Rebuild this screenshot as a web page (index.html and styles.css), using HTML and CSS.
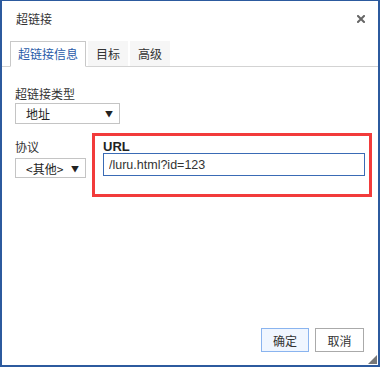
FILE: index.html
```html
<!DOCTYPE html>
<html lang="zh-CN">
<head>
  <meta charset="UTF-8">
  <title>超链接</title>
  <link rel="stylesheet" href="styles.css">
</head>
<body>

<div class="dialog">
  <div class="dialog-head">
    <span class="dialog-title">超链接</span>
    <svg class="close" width="8" height="8" viewBox="0 0 8 8">
      <path d="M1 1L7 7M7 1L1 7" stroke="#666" stroke-width="2" stroke-linecap="square"/>
    </svg>
  </div>

  <div class="tabs">
    <div class="tab active">超链接信息</div>
    <div class="tab">目标</div>
    <div class="tab">高级</div>
  </div>

  <div class="dialog-body">
    <div class="field">
      <label class="label">超链接类型</label>
      <div class="select type-select"><span>地址</span><span class="arrow">▼</span></div>
    </div>

    <div class="row">
      <div class="field proto">
        <label class="label">协议</label>
        <div class="select proto-select"><span>&lt;其他&gt;</span><span class="arrow">▼</span></div>
      </div>
      <div class="url-box">
        <label class="url-label">URL</label>
        <input class="url-input" value="/luru.html?id=123">
      </div>
    </div>
  </div>

  <div class="dialog-foot">
    <button class="btn ok">确定</button>
    <button class="btn">取消</button>
  </div>

  <div class="resize"></div>
</div>

</body>
</html>
```

FILE: styles.css
```css
body {
  margin: 0;
  font-family: "Noto Sans CJK SC", "Liberation Sans", sans-serif;
  font-size: 12px;
  color: #333;
  background: #fff;
}
.dialog {
  position: relative;
  width: 380px;
  height: 367px;
  box-sizing: border-box;
  border: 2px solid #2c5a9e;
  border-top-width: 1px;
  display: flex;
  flex-direction: column;
  background: #fff;
}
.dialog-head {
  height: 40px;
  box-sizing: border-box;
  padding: 10px 13px 0 14px;
  display: flex;
  justify-content: space-between;
  align-items: flex-start;
  line-height: 16px;
}
.dialog-title {
  font-size: 12px;
  color: #333;
}
.close {
  margin-top: 4px;
}
.tabs {
  display: flex;
  align-items: flex-end;
  gap: 2px;
  height: 25px;
  padding-left: 8px;
  border-bottom: 1px solid #d3d3d3;
}
.tab {
  height: 25px;
  line-height: 25px;
  padding: 0 8px;
  background: #f6f6f6;
  color: #333;
}
.tab.active {
  height: 24px;
  line-height: 24px;
  padding: 0 7px;
  background: #fff;
  color: #2a5ba8;
  border: 1px solid #c8c8c8;
  border-bottom-color: #fff;
  margin-bottom: -1px;
}
.dialog-body {
  flex: 1;
  padding: 20px 13px 0;
}
.label {
  display: block;
  line-height: 14px;
}
.select {
  margin-top: 2px;
  height: 21px;
  box-sizing: border-box;
  border: 1px solid #c4c4c4;
  display: flex;
  justify-content: space-between;
  align-items: center;
  padding: 0 6px 0 10px;
  color: #222;
}
.arrow {
  font-size: 8px;
  color: #222;
}
.type-select {
  width: 105px;
}
.row {
  display: flex;
  align-items: flex-start;
  margin-top: 9px;
}
.proto {
  padding-top: 7px;
}
.proto-select {
  width: 71px;
  height: 20px;
  margin-top: 4px;
}
.url-box {
  margin-left: 6px;
  width: 280px;
  box-sizing: border-box;
  border: 3px solid #f23b3b;
  padding: 4px 4px 18px 8px;
}
.url-label {
  display: block;
  font-family: "Liberation Sans", sans-serif;
  font-weight: bold;
  font-size: 13px;
  line-height: 13px;
  color: #222;
}
.url-input {
  display: block;
  width: 262px;
  height: 23px;
  box-sizing: border-box;
  border: 1px solid #3a6bb5;
  padding: 0 5px;
  font-family: "Liberation Sans", sans-serif;
  font-size: 12.5px;
  color: #333;
  outline: none;
}
.dialog-foot {
  display: flex;
  justify-content: flex-end;
  gap: 6px;
  padding: 0 14px 13px 0;
}
.btn {
  width: 49px;
  height: 24px;
  border: 1px solid #aaa;
  background: #fff;
  font-family: "Noto Sans CJK SC", sans-serif;
  font-size: 12px;
  color: #333;
  padding: 0;
}
.btn.ok {
  width: 48px;
  border-color: #8ab4ef;
  background: #f0f6ff;
}
.resize {
  position: absolute;
  right: 1px;
  bottom: 1px;
  width: 0;
  height: 0;
  border-left: 9px solid transparent;
  border-bottom: 9px solid #777;
}
```
